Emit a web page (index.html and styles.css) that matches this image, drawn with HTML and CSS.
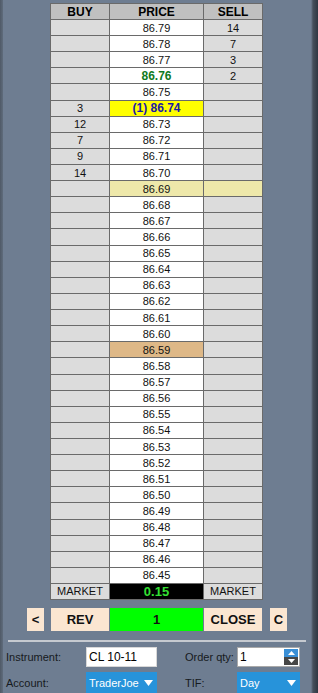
FILE: index.html
```html
<!DOCTYPE html>
<html>
<head>
    <title>Price Ladder</title>
    <link rel="stylesheet" href="styles.css">
</head>
<body>
    <div class="window">
        <div class="ladder">
            <div class="hd">BUY</div><div class="hd">PRICE</div><div class="hd">SELL</div>

            <div class="b"></div><div class="p">86.79</div><div class="s">14</div>
            <div class="b"></div><div class="p">86.78</div><div class="s">7</div>
            <div class="b"></div><div class="p">86.77</div><div class="s">3</div>
            <div class="b"></div><div class="p ask">86.76</div><div class="s">2</div>
            <div class="b"></div><div class="p">86.75</div><div class="s"></div>
            <div class="b">3</div><div class="p last">(1) 86.74</div><div class="s"></div>
            <div class="b">12</div><div class="p">86.73</div><div class="s"></div>
            <div class="b">7</div><div class="p">86.72</div><div class="s"></div>
            <div class="b">9</div><div class="p">86.71</div><div class="s"></div>
            <div class="b">14</div><div class="p">86.70</div><div class="s"></div>
            <div class="b"></div><div class="p hl">86.69</div><div class="s hl"></div>
            <div class="b"></div><div class="p">86.68</div><div class="s"></div>
            <div class="b"></div><div class="p">86.67</div><div class="s"></div>
            <div class="b"></div><div class="p">86.66</div><div class="s"></div>
            <div class="b"></div><div class="p">86.65</div><div class="s"></div>
            <div class="b"></div><div class="p">86.64</div><div class="s"></div>
            <div class="b"></div><div class="p">86.63</div><div class="s"></div>
            <div class="b"></div><div class="p">86.62</div><div class="s"></div>
            <div class="b"></div><div class="p">86.61</div><div class="s"></div>
            <div class="b"></div><div class="p">86.60</div><div class="s"></div>
            <div class="b"></div><div class="p tan">86.59</div><div class="s"></div>
            <div class="b"></div><div class="p">86.58</div><div class="s"></div>
            <div class="b"></div><div class="p">86.57</div><div class="s"></div>
            <div class="b"></div><div class="p">86.56</div><div class="s"></div>
            <div class="b"></div><div class="p">86.55</div><div class="s"></div>
            <div class="b"></div><div class="p">86.54</div><div class="s"></div>
            <div class="b"></div><div class="p">86.53</div><div class="s"></div>
            <div class="b"></div><div class="p">86.52</div><div class="s"></div>
            <div class="b"></div><div class="p">86.51</div><div class="s"></div>
            <div class="b"></div><div class="p">86.50</div><div class="s"></div>
            <div class="b"></div><div class="p">86.49</div><div class="s"></div>
            <div class="b"></div><div class="p">86.48</div><div class="s"></div>
            <div class="b"></div><div class="p">86.47</div><div class="s"></div>
            <div class="b"></div><div class="p">86.46</div><div class="s"></div>
            <div class="b"></div><div class="p">86.45</div><div class="s"></div>

            <div class="b">MARKET</div><div class="p spread">0.15</div><div class="s">MARKET</div>
        </div>

        <div class="actions">
            <button class="btn small">&lt;</button>
            <button class="btn wide">REV</button>
            <button class="btn pos">1</button>
            <button class="btn wide">CLOSE</button>
            <button class="btn small last-btn">C</button>
        </div>

        <div class="sep"></div>

        <div class="form">
            <label>Instrument:</label>
            <div class="field">CL 10-11</div>
            <span></span>
            <label>Order qty:</label>
            <div class="field qty">1
                <span class="spin">
                    <span class="up">
                        <svg width="7" height="4" viewBox="0 0 7 4"><polygon points="0,4 7,4 3.5,0" fill="#fff"/></svg>
                    </span>
                    <span class="down">
                        <svg width="7" height="4" viewBox="0 0 7 4"><polygon points="0,0 7,0 3.5,4" fill="#fff"/></svg>
                    </span>
                </span>
            </div>

            <label>Account:</label>
            <div class="combo"><span class="val">TraderJoe</span>
                <svg width="9" height="6" viewBox="0 0 9 6"><polygon points="0,0 9,0 4.5,6" fill="#fff"/></svg>
            </div>
            <span></span>
            <label>TIF:</label>
            <div class="combo"><span class="val">Day</span>
                <svg width="9" height="6" viewBox="0 0 9 6"><polygon points="0,0 9,0 4.5,6" fill="#fff"/></svg>
            </div>
        </div>
    </div>
</body>
</html>
```

FILE: styles.css
```css
html, body {
    margin: 0;
    height: 100%;
}
body {
    background: linear-gradient(to right, #4f5966 0, #5f6c7c 3px, #6e7d91 3px, #6e7d91 311px, #46505c 313px, #2f3742 318px);
    font-family: "Liberation Sans", Arial, sans-serif;
    overflow: hidden;
}
.window {
    padding-top: 3px;
}

/* price ladder */
.ladder {
    margin-left: 50px;
    width: 213px;
    height: 597px;
    box-sizing: border-box;
    padding: 1px;
    display: grid;
    grid-template-columns: 58px 93px 58px;
    grid-template-rows: 15px repeat(35, 1fr) 15px;
    gap: 1px;
    background: #6a6a6a;
}
.ladder div {
    display: flex;
    align-items: center;
    justify-content: center;
    font-size: 11px;
    color: #111;
    background: #dcdcdc;
}
.ladder .hd {
    background: #c0c0c0;
    font-weight: bold;
    font-size: 12px;
    color: #000;
}
.ladder .p {
    background: #fff;
}
.ladder .ask {
    color: #0f7a1e;
    font-weight: bold;
    font-size: 12px;
}
.ladder .last {
    background: #ffff00;
    color: #1a1aa8;
    font-weight: bold;
    font-size: 12px;
}
.ladder .hl {
    background: #eee8aa;
}
.ladder .tan {
    background: #deb887;
}
.ladder .spread {
    background: #000;
    color: #33e033;
    font-weight: bold;
    font-size: 13px;
}

/* buttons */
.actions {
    display: flex;
    margin-top: 8px;
    padding-left: 27px;
    height: 23px;
}
.btn {
    border: none;
    padding: 0;
    margin: 0;
    height: 23px;
    background: #fbe6d1;
    font-family: "Liberation Sans", Arial, sans-serif;
    font-weight: bold;
    font-size: 13px;
    color: #111;
}
.btn.small {
    width: 17px;
    margin-right: 7px;
}
.btn.wide {
    width: 58px;
}
.btn.pos {
    width: 93px;
    margin: 0 1px;
    background: #00ff00;
}
.btn.last-btn {
    margin: 0 0 0 8px;
}

.sep {
    margin: 9px 0 0 8px;
    width: 298px;
    height: 2px;
    background: #c6cad0;
}

/* order form */
.form {
    display: grid;
    grid-template-columns: 80px 71px 28px 52px 63px;
    grid-template-rows: 20px 22px;
    row-gap: 5px;
    padding: 5px 0 0 6px;
    font-size: 11px;
    color: #161a20;
}
.form label {
    display: flex;
    align-items: center;
    white-space: nowrap;
}
.field {
    background: #fff;
    border: 1px solid #d8d8d8;
    box-sizing: border-box;
    padding-left: 2px;
    display: flex;
    align-items: center;
    color: #000;
    font-size: 12px;
}
.field.qty {
    border-color: #a9a9a9;
    position: relative;
}
.spin {
    position: absolute;
    right: 1px;
    top: 1px;
    width: 14px;
    height: 16px;
    display: flex;
    flex-direction: column;
}
.spin .up, .spin .down {
    flex: 1;
    display: flex;
    align-items: center;
    justify-content: center;
}
.spin .up {
    background: #3a8fd6;
}
.spin .down {
    background: #464646;
}
.combo {
    background: #2793da;
    color: #fff;
    display: flex;
    align-items: center;
    padding: 0 4px 0 3px;
    overflow: hidden;
}
.combo .val {
    flex: 1;
    overflow: hidden;
    white-space: nowrap;
    font-size: 11px;
}
.combo svg {
    margin-left: 4px;
}
```
